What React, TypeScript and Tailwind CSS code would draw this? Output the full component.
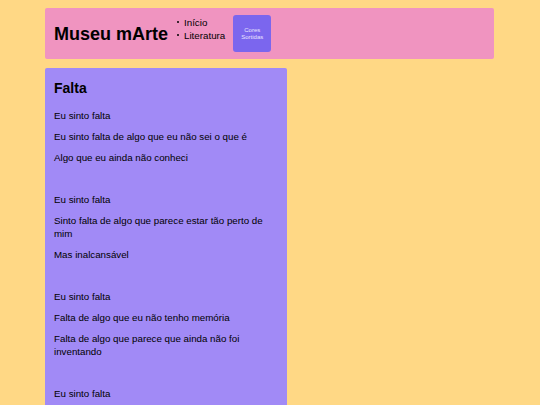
import React from "react";

const stanzas: string[][] = [
  ["Eu sinto falta", "Eu sinto falta de algo que eu não sei o que é", "Algo que eu ainda não conheci"],
  ["Eu sinto falta", "Sinto falta de algo que parece estar tão perto de mim", "Mas inalcansável"],
  ["Eu sinto falta", "Falta de algo que eu não tenho memória", "Falta de algo que parece que ainda não foi inventando"],
  ["Eu sinto falta"],
];

export default function App() {
  return (
    <div
      className="h-[405px] w-[540px] overflow-hidden bg-[#ffd885] px-[45px] pt-[8px] text-black"
      style={{ fontFamily: '"Comic Sans MS", "Liberation Sans", sans-serif' }}
    >
      <header className="flex h-[51px] w-[449px] items-center rounded-[2px] bg-[#f094c0] pl-[9px]">
        <h1 className="text-[18px] font-bold leading-none">Museu mArte</h1>
        <ul className="mb-[10px] ml-[9px] flex flex-col gap-[2px] text-[9.75px] leading-[11px]">
          <li className="flex items-center gap-[5px]">
            <span className="h-[2px] w-[2px] rounded-full bg-black" />
            Início
          </li>
          <li className="flex items-center gap-[5px]">
            <span className="h-[2px] w-[2px] rounded-full bg-black" />
            Literatura
          </li>
        </ul>
        <button className="ml-[8px] flex h-[37px] w-[38px] items-center justify-center rounded-[3px] bg-[#7b66ee] text-center text-[6px] leading-[7px] text-[#e8e4ff]">
          Cores
          <br />
          Sortidas
        </button>
      </header>
      <main className="mt-[9px] w-[242px] rounded-t-[2px] bg-[#a18af6] px-[9px] pt-[11px] pb-[20px]">
        <h2 className="text-[14px] font-bold leading-[18px]">Falta</h2>
        <div className="mt-[12px] text-[9.75px] leading-[13px]">
          {stanzas.map((s, i) => (
            <div key={i} className={i > 0 ? "mt-[29px]" : ""}>
              {s.map((line, j) => (
                <p key={j} className={j > 0 ? "mt-[8px]" : ""}>
                  {line}
                </p>
              ))}
            </div>
          ))}
        </div>
      </main>
    </div>
  );
}
